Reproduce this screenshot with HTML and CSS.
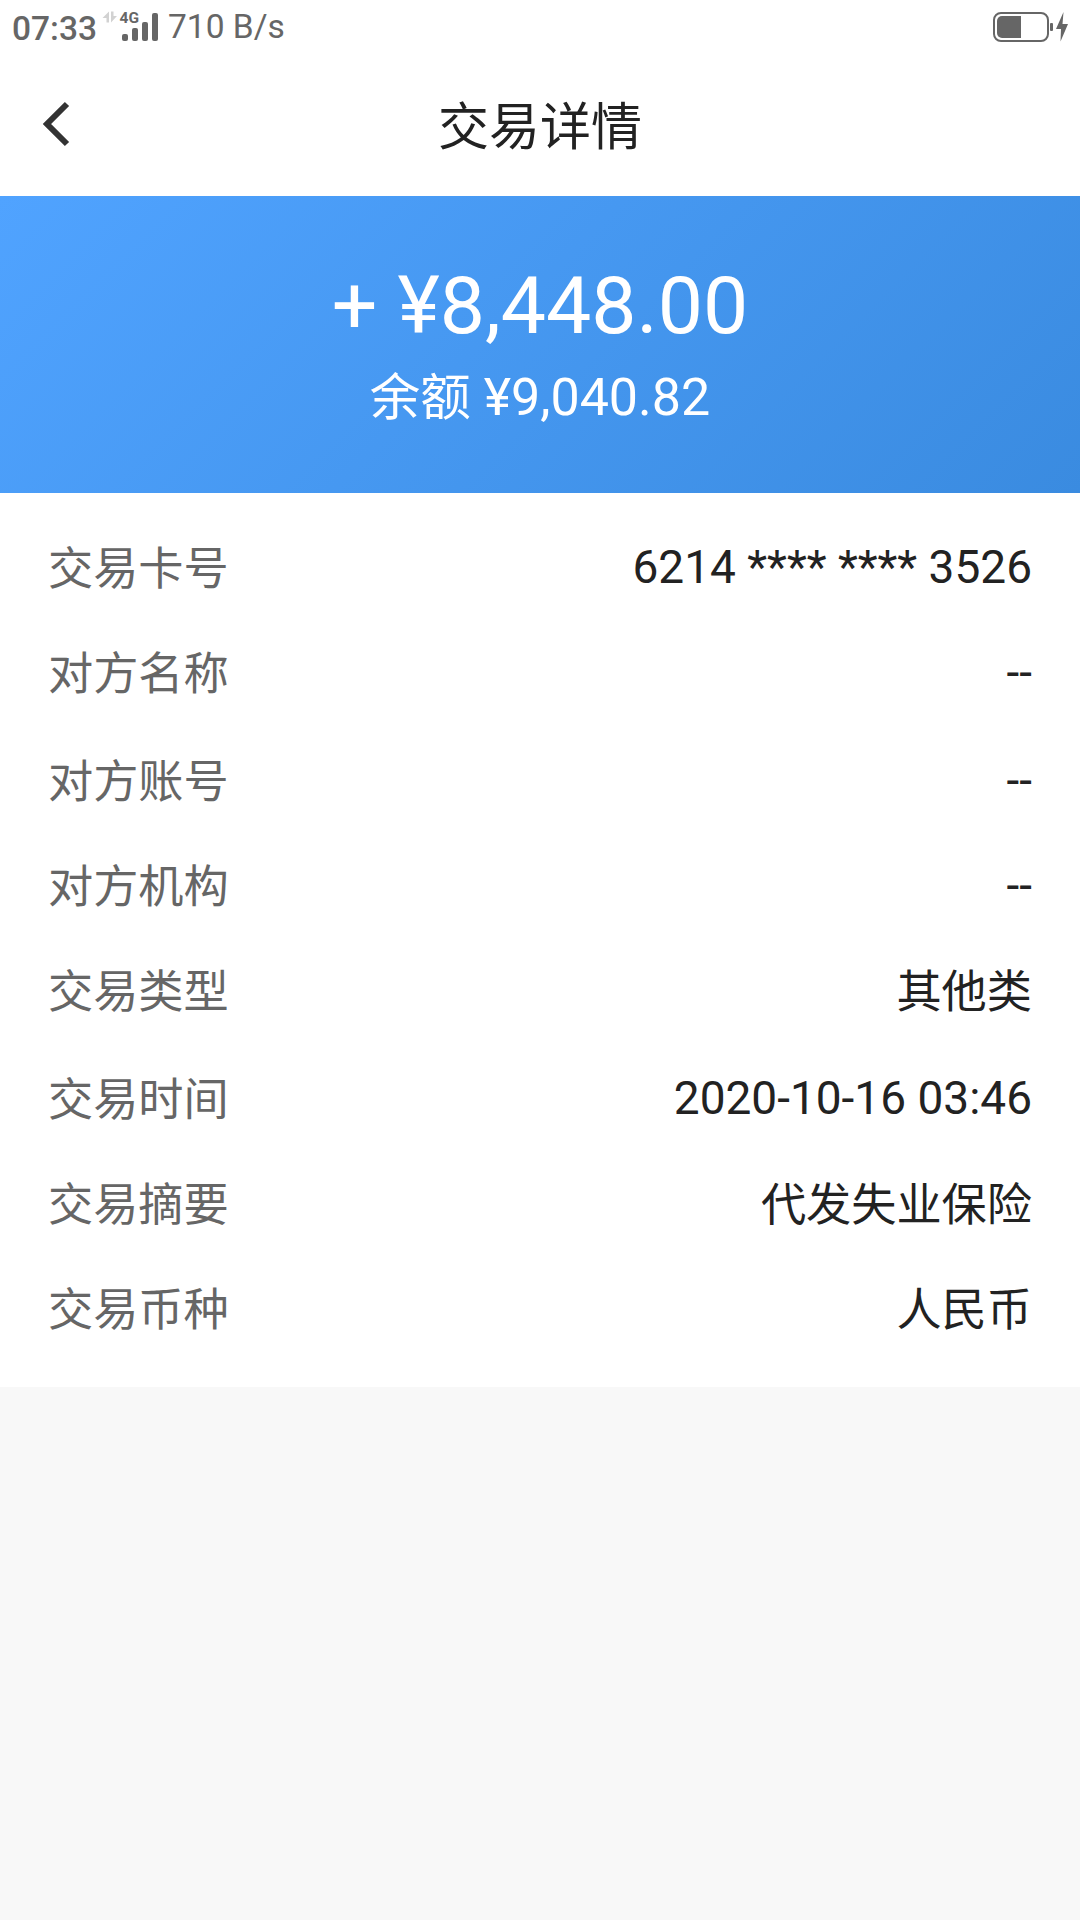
FILE: index.html
```html
<!DOCTYPE html>
<html lang="zh-CN">
<head>
<meta charset="utf-8">
<title>交易详情</title>
<link rel="stylesheet" href="styles.css">
</head>
<body>
<div class="status">
  <span class="clock">07:33</span>
  <svg class="signal" width="60" height="40" viewBox="0 0 60 40">
    <path class="traffic" d="M2.500 18l6.500-6.500v11h-2.500v-4.500zM11 11.500h2.500v4.500h3.500l-6 6.500z"/>
    <text class="network" x="19.5" y="23">4G</text>
    <rect x="22" y="34" width="6" height="7" rx="2"/>
    <rect x="32" y="28" width="6" height="13" rx="2"/>
    <rect x="42" y="22" width="6" height="19" rx="2"/>
    <rect x="52" y="13" width="6" height="28" rx="2"/>
  </svg>
  <span class="speed">710 B/s</span>
  <svg class="battery" width="78" height="32" viewBox="0 0 78 32">
    <rect class="shell" x="2" y="2" width="54" height="28" rx="7"/>
    <path d="M10 5H29V27H10a5 5 0 0 1-5-5V10a5 5 0 0 1 5-5z"/>
    <rect x="58" y="12" width="3" height="8" rx="1"/>
    <path d="M71.500 1L64 18h5l-.500 12.500L76 13h-5.500z"/>
  </svg>
</div>
<header class="header">
  <svg class="back" width="30" height="46" viewBox="0 0 30 46"><path d="M27 3L7 23L27 43"/></svg>
  <h1 class="title">交易详情</h1>
</header>
<section class="summary">
  <p class="amount">+ ¥8,448.00</p>
  <p class="balance"><span class="balance-label">余额</span> ¥9,040.82</p>
</section>
<dl class="details">
  <div class="row"><dt>交易卡号</dt><dd class="num">6214 **** **** 3526</dd></div>
  <div class="row"><dt>对方名称</dt><dd class="num">--</dd></div>
  <div class="row"><dt>对方账号</dt><dd class="num">--</dd></div>
  <div class="row"><dt>对方机构</dt><dd class="num">--</dd></div>
  <div class="row"><dt>交易类型</dt><dd>其他类</dd></div>
  <div class="row"><dt>交易时间</dt><dd class="num">2020-10-16 03:46</dd></div>
  <div class="row"><dt>交易摘要</dt><dd>代发失业保险</dd></div>
  <div class="row"><dt>交易币种</dt><dd>人民币</dd></div>
</dl>
</body>
</html>
```

FILE: styles.css
```css
* { box-sizing: border-box; margin: 0; padding: 0; }
body {
  min-height: 1920px;
  background: #f8f8f8;
  color: #222;
  font-family: Roboto, "Noto Sans CJK SC", sans-serif;
}
.status {
  display: flex;
  height: 56px;
  padding: 0 10px 0 12px;
  background: #fff;
  color: #666;
  line-height: 57px;
}
.clock { width: 88px; font-size: 33.500px; font-weight: 500; white-space: nowrap; }
.signal { fill: #666; overflow: visible; }
.traffic { fill: #d2d2d2; }
.network { font: bold 15.500px Roboto, sans-serif; }
.speed { margin-left: 8px; font-size: 33.500px; line-height: 54px; }
.battery { margin: 11px 0 0 auto; fill: #666; }
.shell { fill: none; stroke: #666; stroke-width: 2; }
.header {
  display: grid;
  grid-template-columns: 80px 1fr 80px;
  align-items: center;
  height: 140px;
  background: #fff;
}
.back { margin: -5px 0 0 40px; fill: none; stroke: #333; stroke-width: 6; }
.title { padding-top: 4px; font-size: 51px; font-weight: 400; line-height: 60px; text-align: center; }
.summary {
  height: 297px;
  padding-top: 61px;
  background: linear-gradient(135deg, #50a3ff, #3a8be0);
  color: #fff;
  text-align: center;
}
.amount { font-size: 80.500px; line-height: 98px; }
.balance { padding-top: 1px; font-size: 52px; line-height: 84px; }
.balance-label { font-size: 50.500px; }
.details { height: 894px; padding: 24px 48px 0; background: #fff; }
.row { display: flex; justify-content: space-between; height: 105px; font-size: 45.200px; line-height: 105px; }
.row:nth-child(3n) { height: 108px; line-height: 111px; }
dt { color: #666; }
.num { margin-top: -2px; font-size: 46px; }
```
